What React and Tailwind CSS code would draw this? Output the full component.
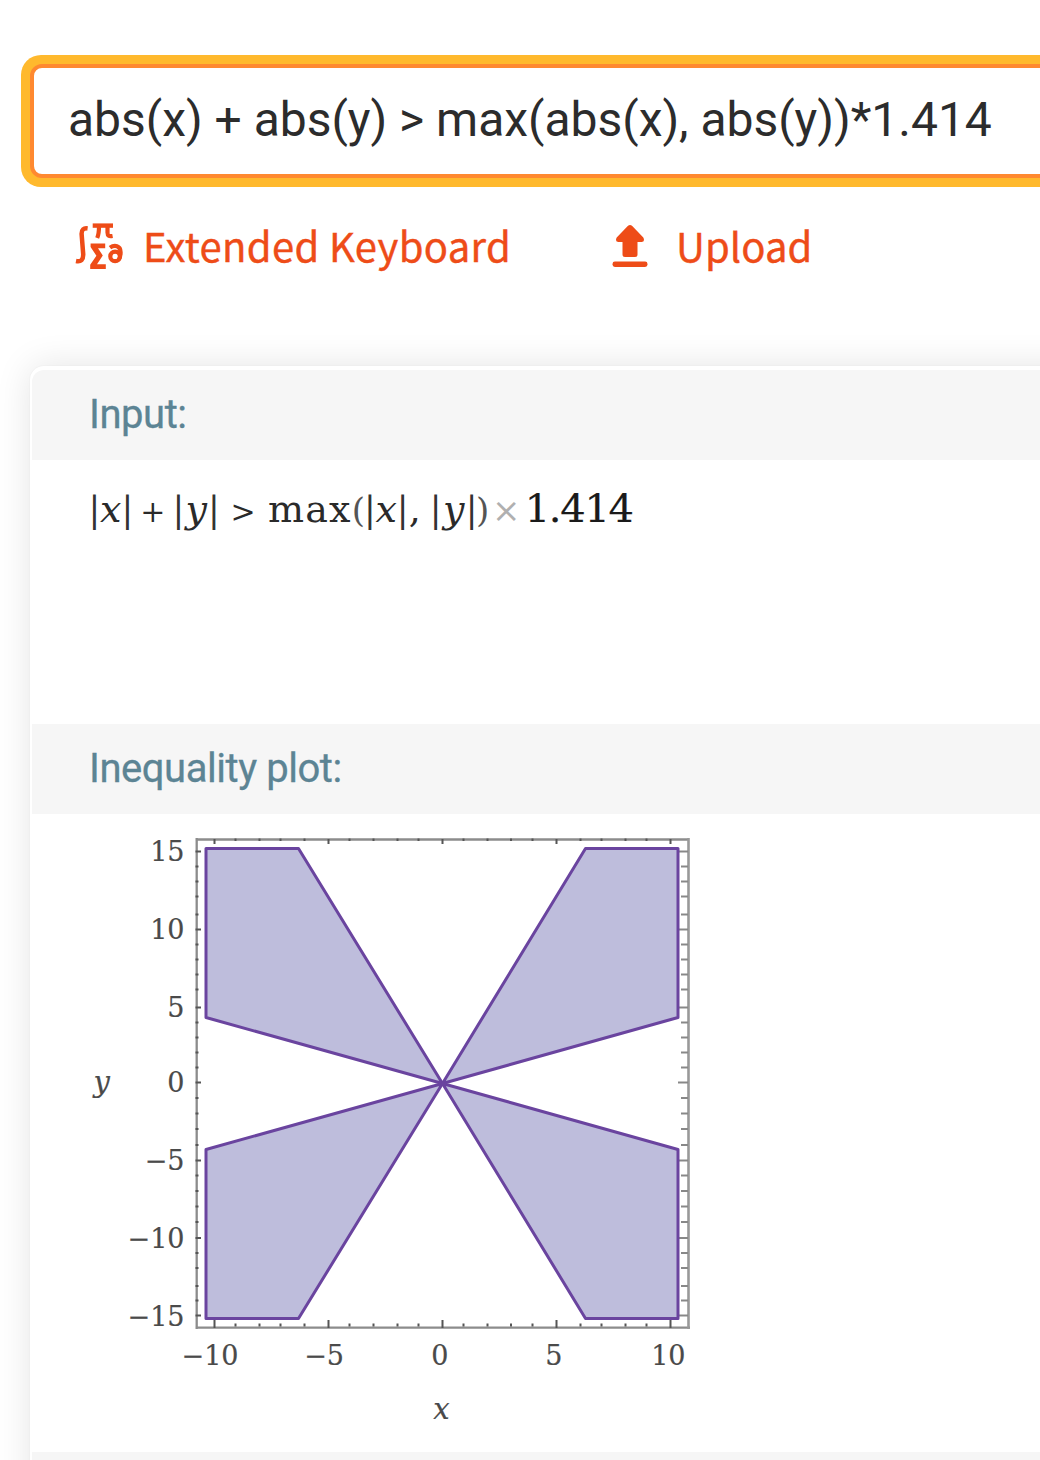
import React from "react";

function KeyboardIcon() {
  return (
    <svg className="block h-[50px] w-[50px] shrink-0" viewBox="75 221 50 50" fill="none" stroke="#ee4c18">
      <path d="M87.6 228.4 C83.6 227.8 81.5 229.6 81.6 234 L83.2 254 C83.4 259.8 81 262 76 261" strokeWidth="4.5" />
      <path d="M92.7 225.6 H113" strokeWidth="4.4" />
      <path d="M99 226 C99 231 98.8 234.5 97.2 238" strokeWidth="4.2" />
      <path d="M107.5 226 V232.5 C107.5 236 109 236.6 112.6 236" strokeWidth="4.2" />
      <path d="M90.6 243.4 H105.2 V248.2 H98 L102.8 255.6 L97 264.2 H105.8 V269 H90.2 V264.8 L96.4 255.8 L90.6 247 Z" fill="#ee4c18" stroke="none" />
      <ellipse cx="115.1" cy="256.4" rx="4.8" ry="4.7" strokeWidth="4.2" />
      <path d="M110 247.6 C114.5 244.4 120.6 245.4 120.6 252.2 C120.6 256 120 258.4 118.4 260" strokeWidth="4.2" />
    </svg>
  );
}

function UploadIcon() {
  return (
    <svg className="block h-[44px] w-[38px] shrink-0" viewBox="611 224 38 44" fill="#ee4c18">
      <path d="M628 225.8 Q630 224 632 225.8 L643.3 237.5 Q645.3 241.6 641.5 242 H637.5 V254.5 Q637.5 257 635 257 H625 Q622.5 257 622.5 254.5 V242 H618.5 Q614.7 241.6 616.7 237.5 Z" />
      <rect x="612.5" y="261.6" width="35" height="5.4" rx="2.4" />
    </svg>
  );
}

function Heading({ children, className = "" }) {
  return (
    <div className={`ml-[2px] flex h-[90px] items-center bg-[#f6f6f6] pl-[57px] font-[Roboto,sans-serif] text-[40px] leading-none tracking-[-0.45px] text-[#5c8494] [-webkit-text-stroke:0.3px_#5c8494] ${className}`}>
      <span className="whitespace-nowrap">{children}</span>
    </div>
  );
}

function Bar({ className = "" }) {
  return <span className={`flex w-[12px] justify-center text-[35px] text-[#333] ${className}`}>|</span>;
}

function Formula() {
  return (
    <div className="ml-[58.3px] flex h-[60px] items-baseline pt-[23px] font-['DejaVu_Serif',serif] text-[40px] leading-[50px] whitespace-nowrap text-[#2a2a2a]">
      <Bar />
      <span className="flex w-[21px] justify-center text-[38px] italic">x</span>
      <Bar />
      <span className="flex w-[39px] justify-center text-[30px]">+</span>
      <Bar />
      <span className="flex w-[23.7px] justify-center text-[38px] italic">y</span>
      <Bar />
      <span className="flex w-[46px] justify-center text-[30px]">&gt;</span>
      <span className="w-[87px] pl-[2px] text-[38px] tracking-[1.2px]">max</span>
      <span className="flex w-[11px] justify-center text-[34px] text-[#555]">(</span>
      <Bar />
      <span className="flex w-[20.7px] justify-center text-[38px] italic">x</span>
      <Bar />
      <span className="w-[21px] text-[38px]">,</span>
      <Bar />
      <span className="flex w-[24px] justify-center text-[38px] italic">y</span>
      <Bar />
      <span className="flex w-[10px] justify-center text-[34px] text-[#555]">)</span>
      <span className="flex w-[37px] justify-center text-[34px] text-[#b0b0b0]">×</span>
      <span className="text-[40px] tracking-[-1.3px] text-[#1a1a1a] [-webkit-text-stroke:0.2px_#1a1a1a]">1.414</span>
    </div>
  );
}

const X_MAJOR = [214.5, 328.5, 442.5, 556.5, 670.5];
const X_MINOR = [235.5, 259.5, 280.5, 304.5, 349.5, 373.5, 397.5, 418.5, 463.5, 487.5, 511, 532.5, 580.5, 601.5, 625.5, 646.5];
const Y_MAJOR = [851.5, 929.5, 1007.5, 1082.5, 1160.5, 1238, 1315.5];
const Y_MINOR = [866.5, 881.5, 896.5, 914.5, 944.5, 959.5, 974.5, 989.5, 1022.5, 1037.5, 1052.5, 1067.5, 1098, 1113.5, 1129, 1145, 1175.5, 1191, 1206.5, 1222, 1253, 1268, 1286, 1300.5];
const Y_LABELS = [["15", 861], ["10", 939], ["5", 1017], ["0", 1092], ["−5", 1170], ["−10", 1247.5], ["−15", 1325.5]];
const X_LABELS = [["−10", 238.5], ["−5", 344], ["0", 448.5], ["5", 562.5], ["10", 685.5]];
const REGIONS = [
  "206,848.5 298.5,848.5 442.5,1083.5 206,1017.5",
  "678,848.5 585.5,848.5 442.5,1083.5 678,1017.5",
  "206,1318.5 298.5,1318.5 442.5,1083.5 206,1149.5",
  "678,1318.5 585.5,1318.5 442.5,1083.5 678,1149.5",
];

function Plot() {
  return (
    <svg className="ml-[50px] block h-[620px] w-[620px]" viewBox="80 820 620 620">
      <g fill="none" stroke="#8c8c8c" strokeWidth="2.3">
        <path d="M196.7 838 V1329 M195.5 839.5 H689 M195.5 1327.7 H690" />
        <path d="M688.5 838 V1329" stroke="#999" strokeWidth="2.6" />
      </g>
      <g stroke="#555" strokeWidth="2">
        {X_MAJOR.map((x) => <path key={x} d={`M${x} 839 V844 M${x} 1328 V1320`} />)}
        {X_MINOR.map((x) => <path key={x} d={`M${x} 838.5 V841 M${x} 1326.5 V1323.5`} />)}
        {Y_MAJOR.map((y) => <path key={y} d={`M195.5 ${y} H201`} />)}
        {Y_MINOR.map((y) => <path key={y} d={`M195.5 ${y} H198.5`} />)}
      </g>
      <g stroke="#888" strokeWidth="2">
        {Y_MAJOR.map((y) => <path key={y} d={`M678 ${y} H688`} />)}
        {Y_MINOR.map((y) => <path key={y} d={`M681 ${y} H688`} />)}
      </g>
      <g fill="#bebddc" stroke="#6a449f" strokeWidth="3" strokeLinejoin="round">
        {REGIONS.map((p) => <polygon key={p} points={p} />)}
      </g>
      <g fill="#4a4a4a" stroke="#4a4a4a" strokeWidth="0.2" fontFamily="'DejaVu Serif', serif" fontSize="27" textAnchor="end">
        {Y_LABELS.map(([t, y]) => <text key={t} x="184.5" y={y}>{t}</text>)}
        {X_LABELS.map(([t, x]) => <text key={t} x={x} y="1364.5">{t}</text>)}
        <text x="110" y="1092" fontStyle="italic" fontSize="29">y</text>
        <text x="449.5" y="1419" fontStyle="italic" fontSize="29">x</text>
      </g>
    </svg>
  );
}

export default function App() {
  return (
    <main className="h-[1460px] w-[1040px] overflow-hidden bg-white pt-[55px]">
      <div className="ml-[21px] h-[132px] w-[1100px] rounded-[20px] bg-[#ffb92d] p-[9px]">
        <div className="flex h-[114px] items-center rounded-[12px] border-4 border-[#ff8930] bg-white pb-[2px] pl-[34px] font-[Roboto,sans-serif] text-[48px] leading-none tracking-[-0.02px] text-[#2c2c2c]">
          <span className="whitespace-nowrap">abs(x) + abs(y) &gt; max(abs(x), abs(y))*1.414</span>
        </div>
      </div>
      <div className="flex h-[118px] items-center pl-[75px] font-['Noto_Sans_CJK_SC',sans-serif] text-[40px] leading-none text-[#ee4c18] [-webkit-text-stroke:0.4px_#ee4c18]">
        <KeyboardIcon />
        <span className="ml-[18px] w-[468px] pb-[2px] tracking-[0.35px] whitespace-nowrap">Extended Keyboard</span>
        <UploadIcon />
        <span className="ml-[27px] pb-[2px] tracking-[0.1px] whitespace-nowrap">Upload</span>
      </div>
      <section className="mt-[61px] ml-[30px] h-[1200px] w-[1100px] rounded-t-[14px] bg-white pt-[4px] shadow-[0_0_2px_rgba(0,0,0,0.06),0_0_36px_rgba(0,0,0,0.11)]">
        <Heading className="rounded-tl-[12px]">Input:</Heading>
        <div className="h-[264px]"><Formula /></div>
        <Heading>Inequality plot:</Heading>
        <div className="h-[638px] pt-[6px]"><Plot /></div>
        <div className="ml-[2px] h-[90px] bg-[#f6f6f6]" />
      </section>
    </main>
  );
}
